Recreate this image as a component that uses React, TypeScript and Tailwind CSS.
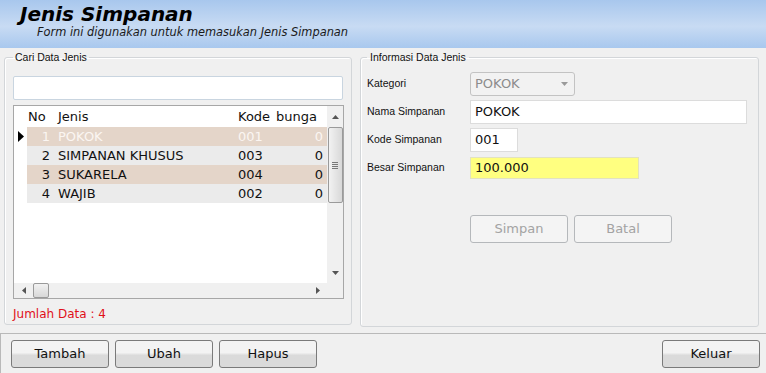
import React from "react"

const sans = { fontFamily: '"DejaVu Sans", Verdana, sans-serif' }
const ui = { fontFamily: '"Liberation Sans", Arial, sans-serif' }

type Row = { no: number; jenis: string; kode: string; bunga: number }

const rows: Row[] = [
  { no: 1, jenis: "POKOK", kode: "001", bunga: 0 },
  { no: 2, jenis: "SIMPANAN KHUSUS", kode: "003", bunga: 0 },
  { no: 3, jenis: "SUKARELA", kode: "004", bunga: 0 },
  { no: 4, jenis: "WAJIB", kode: "002", bunga: 0 },
]

function Btn({ children, disabled }: { children: React.ReactNode; disabled?: boolean }) {
  if (disabled) {
    return (
      <button className="flex h-[28px] w-[98px] items-center justify-center rounded-[3px] border border-[#b5b8bb] bg-[#f4f4f4] text-[13px] text-[#a3a3a3]">
        {children}
      </button>
    )
  }
  return (
    <button className="flex h-[28px] w-[98px] items-center justify-center rounded-[3px] border border-[#7a7a7a] bg-linear-to-b from-[#f3f3f3] from-45% to-[#dadada] to-55% text-[13px] text-[#111]">
      {children}
    </button>
  )
}

function GridView() {
  return (
    <div className="mt-[5px] flex h-[194px] w-[331px] flex-col border border-[#a7a7a7] bg-white text-[13px]">
      <div className="flex min-h-0 flex-1">
        <div className="flex-1">
          <div className="flex h-[21px] items-center text-[#111]">
            <div className="w-[13px]" />
            <div className="w-[28px] pl-[1px]">No</div>
            <div className="w-[180px] pl-[3px]">Jenis</div>
            <div className="w-[38px] pl-[3px]">Kode</div>
            <div className="flex-1 pl-[3px]">bunga</div>
          </div>
          {rows.map((r, i) => {
            const tan = i % 2 === 0
            const sel = i === 0
            return (
              <div key={r.no} className="flex h-[19px] items-center">
                <div className="flex w-[13px] items-center justify-center">
                  {sel && (
                    <svg width="6" height="11" viewBox="0 0 6 11">
                      <path d="M0 0 L6 5.5 L0 11 Z" fill="#000" />
                    </svg>
                  )}
                </div>
                <div
                  className={`flex h-full flex-1 items-center ${tan ? "bg-[#e4d5c9]" : "bg-[#ebebeb]"} ${
                    sel ? "text-[#fbf6f2]" : "text-[#111]"
                  }`}
                >
                  <div className="w-[28px] pr-[5px] text-right">{r.no}</div>
                  <div className="w-[180px] pl-[3px]">{r.jenis}</div>
                  <div className="w-[38px] pl-[3px]">{r.kode}</div>
                  <div className="flex-1 pr-[4px] text-right">{r.bunga}</div>
                </div>
              </div>
            )
          })}
        </div>
        {/* vertical scrollbar */}
        <div className="flex w-[16px] flex-col items-center bg-[#f0f0f0]">
          <div className="flex h-[21px] items-center justify-center">
            <svg width="7" height="4" viewBox="0 0 7 4">
              <path d="M0 4 L3.5 0 L7 4 Z" fill="#555" />
            </svg>
          </div>
          <div className="flex h-[76px] w-[15px] items-center justify-center rounded-[2px] border border-[#9a9a9a] bg-linear-to-r from-[#f2f2f2] to-[#d8d8d8]">
            <div className="flex flex-col gap-[1px]">
              <div className="h-px w-[6px] bg-[#777]" />
              <div className="h-px w-[6px] bg-[#777]" />
              <div className="h-px w-[6px] bg-[#777]" />
              <div className="h-px w-[6px] bg-[#777]" />
            </div>
          </div>
          <div className="flex-1" />
          <div className="flex h-[20px] items-center justify-center">
            <svg width="7" height="4" viewBox="0 0 7 4">
              <path d="M0 0 L3.5 4 L7 0 Z" fill="#555" />
            </svg>
          </div>
        </div>
      </div>
      {/* horizontal scrollbar */}
      <div className="flex h-[15px]">
        <div className="flex flex-1 items-center bg-[#f0f0f0]">
          <div className="flex w-[19px] justify-center">
            <svg width="4" height="7" viewBox="0 0 4 7">
              <path d="M4 0 L0 3.5 L4 7 Z" fill="#555" />
            </svg>
          </div>
          <div className="h-[15px] w-[16px] rounded-[2px] border border-[#9a9a9a] bg-linear-to-b from-[#f2f2f2] to-[#d8d8d8]" />
          <div className="flex-1" />
          <div className="flex w-[19px] justify-center">
            <svg width="4" height="7" viewBox="0 0 4 7">
              <path d="M0 0 L4 3.5 L0 7 Z" fill="#555" />
            </svg>
          </div>
        </div>
        <div className="w-[16px] bg-[#f0f0f0]" />
      </div>
    </div>
  )
}

function Field({ label, children }: { label: string; children: React.ReactNode }) {
  return (
    <div className="flex items-start">
      <div className="w-[103px] pt-[4px] text-[10.5px] text-[#111]" style={ui}>
        {label}
      </div>
      {children}
    </div>
  )
}

export default function App() {
  return (
    <div className="flex h-[373px] w-[766px] flex-col overflow-hidden bg-[#f0f0f0]" style={sans}>
      {/* header */}
      <div className="h-[48px] bg-linear-to-b from-[#a8c7ed] via-[#c8dbf3] via-55% to-[#a8c8ee] pl-[20px] pt-[2px]">
        <div className="text-[20px] font-bold italic leading-[24px] text-black">Jenis Simpanan</div>
        <div className="pl-[17px] text-[11.4px] italic leading-[13px] text-[#1a1a1a]">
          Form ini digunakan untuk memasukan Jenis Simpanan
        </div>
      </div>

      {/* main */}
      <div className="flex h-[285px] items-start pt-[3px]">
        <fieldset className="ml-[4px] h-[274px] w-[348px] rounded-[3px] border border-[#d3d6d9] pl-[8px] shadow-[inset_1px_1px_0_#fff]">
          <legend className="px-[2px] text-[10.5px] leading-[12px] text-[#111]" style={ui}>
            Cari Data Jenis
          </legend>
          <input
            className="mt-[13px] block h-[24px] w-[330px] rounded-[2px] border border-[#c9d5e0] bg-white outline-none"
            readOnly
          />
          <GridView />
          <div className="mt-[6px] text-[12px] text-[#e0101a]">Jumlah Data : 4</div>
        </fieldset>

        <fieldset className="ml-[8px] h-[276px] w-[399px] rounded-[3px] border border-[#d3d6d9] pl-[6px] shadow-[inset_1px_1px_0_#fff]">
          <legend className="px-[3px] text-[10.5px] leading-[12px] text-[#111]" style={ui}>
            Informasi Data Jenis
          </legend>
          <div className="mt-[9px] flex flex-col gap-[4px]">
            <Field label="Kategori">
              <div className="flex h-[24px] w-[105px] items-center justify-between rounded-[3px] border border-[#c3c3c3] bg-[#f2f2f2] pl-[4px] pr-[6px] text-[13px] text-[#8c8c8c]">
                <span>POKOK</span>
                <svg width="7" height="4" viewBox="0 0 7 4">
                  <path d="M0 0 L3.5 4 L7 0 Z" fill="#9a9a9a" />
                </svg>
              </div>
            </Field>
            <Field label="Nama Simpanan">
              <div className="flex h-[24px] w-[277px] items-center border border-[#dcdcdc] bg-white pl-[4px] text-[13px] text-[#111]">
                POKOK
              </div>
            </Field>
            <Field label="Kode Simpanan">
              <div className="flex h-[24px] w-[48px] items-center border border-[#dcdcdc] bg-white pl-[4px] text-[13px] text-[#111]">
                001
              </div>
            </Field>
            <Field label="Besar Simpanan">
              <div className="mt-[1px] flex h-[22px] w-[169px] items-center border border-[#e2e2c0] bg-[#ffff80] pl-[4px] text-[13px] text-[#111]">
                100.000
              </div>
            </Field>
          </div>
          <div className="ml-[103px] mt-[36px] flex gap-[6px]">
            <Btn disabled>Simpan</Btn>
            <Btn disabled>Batal</Btn>
          </div>
        </fieldset>
      </div>

      {/* bottom bar */}
      <div className="flex h-[40px] items-start border-t border-l border-[#b9b9b9] pl-[10px] pr-[6px] pt-[6px]">
        <div className="flex gap-[6px]">
          <Btn>Tambah</Btn>
          <Btn>Ubah</Btn>
          <Btn>Hapus</Btn>
        </div>
        <div className="flex-1" />
        <Btn>Keluar</Btn>
      </div>
    </div>
  )
}
